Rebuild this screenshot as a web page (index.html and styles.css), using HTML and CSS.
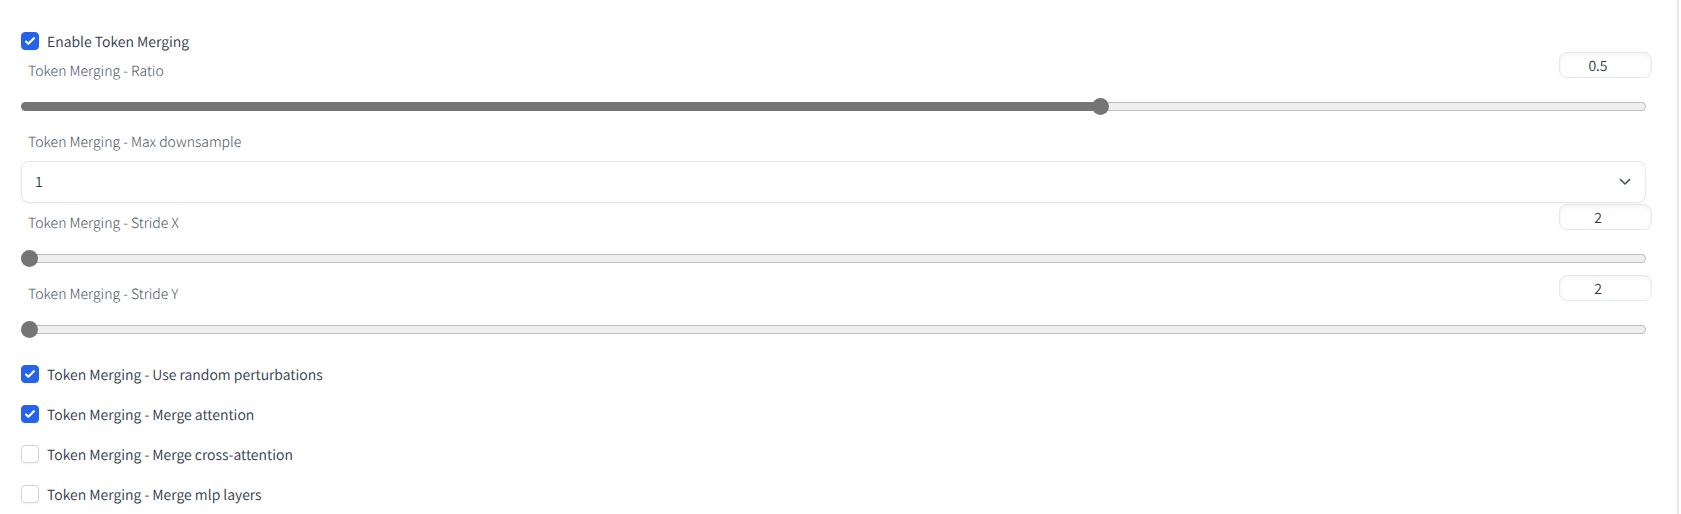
FILE: index.html
```html
<!DOCTYPE html>
<html lang="en">
<head>
<meta charset="utf-8">
<meta name="viewport" content="width=device-width, initial-scale=1">
<title>Token Merging</title>
<link rel="stylesheet" href="styles.css">
</head>
<body>
<main class="panel">
  <label class="check check-first"><input type="checkbox" checked><span>Enable Token Merging</span></label>

  <div class="slider">
    <div class="slider-head">
      <label class="caption" for="ratio">Token Merging - Ratio</label>
      <input class="number" type="number" value="0.5" step="0.05" aria-label="Token Merging - Ratio value">
    </div>
    <input class="range" id="ratio" type="range" min="0" max="0.75" step="0.05" value="0.5" style="--fill: 66.7%">
  </div>

  <div class="field">
    <label class="caption" for="downsample">Token Merging - Max downsample</label>
    <div class="select-wrap">
      <select class="select" id="downsample">
        <option selected>1</option>
        <option>2</option>
        <option>4</option>
        <option>8</option>
      </select>
      <svg class="chevron" viewBox="0 0 12 8" aria-hidden="true"><path d="M1 1.200 6 6l5-4.800"/></svg>
    </div>
  </div>

  <div class="slider">
    <div class="slider-head">
      <label class="caption" for="stride-x">Token Merging - Stride X</label>
      <input class="number" type="number" value="2" aria-label="Token Merging - Stride X value">
    </div>
    <input class="range" id="stride-x" type="range" min="2" max="8" step="2" value="2" style="--fill: 0%">
  </div>

  <div class="slider">
    <div class="slider-head">
      <label class="caption" for="stride-y">Token Merging - Stride Y</label>
      <input class="number" type="number" value="2" aria-label="Token Merging - Stride Y value">
    </div>
    <input class="range" id="stride-y" type="range" min="2" max="8" step="2" value="2" style="--fill: 0%">
  </div>

  <div class="checks">
    <label class="check"><input type="checkbox" checked><span>Token Merging - Use random perturbations</span></label>
    <label class="check"><input type="checkbox" checked><span>Token Merging - Merge attention</span></label>
    <label class="check"><input type="checkbox"><span>Token Merging - Merge cross-attention</span></label>
    <label class="check"><input type="checkbox"><span>Token Merging - Merge mlp layers</span></label>
  </div>
</main>
</body>
</html>
```
FILE: styles.css
```css
* {
  box-sizing: border-box;
}

body {
  margin: 0;
  background: #fff;
  color: #303a49;
  font-family: "Noto Sans CJK SC", "Noto Sans", sans-serif;
  font-size: 14px;
  font-weight: 350;
  line-height: 24px;
  text-rendering: geometricPrecision;
}

input,
select {
  margin: 0;
  color: inherit;
  font: inherit;
  text-rendering: inherit;
}

.panel {
  min-height: 100vh;
  margin-right: 2px;
  padding: 30px 31px 8px 21px;
  border-right: 2px solid #e5e7eb;
}

.check {
  display: flex;
  align-items: center;
  gap: 8px;
  width: fit-content;
  height: 24px;
}

.check span {
  padding-top: 1px;
}

.check-first {
  height: 22px;
}

.check input {
  appearance: none;
  width: 18px;
  height: 18px;
  border: 1px solid #d1d5db;
  border-radius: 4px;
  background: #fff;
  box-shadow: 0 1px 2px rgba(0, 0, 0, 0.05);
}

.check input:checked {
  border-color: #2563eb;
  background: #2563eb url("data:image/svg+xml,%3Csvg viewBox='0 0 16 16' fill='white' xmlns='http://www.w3.org/2000/svg'%3E%3Cpath d='M12.207 4.793a1 1 0 010 1.414l-5 5a1 1 0 01-1.414 0l-2-2a1 1 0 011.414-1.414L6.500 9.086l4.293-4.293a1 1 0 011.414 0z'/%3E%3C/svg%3E") center / 18px no-repeat border-box;
}

.checks {
  display: flex;
  flex-direction: column;
  gap: 16px;
  padding-top: 16px;
}

.caption {
  display: block;
  padding-left: 7px;
  color: #4b5563;
  font-weight: 300;
}

.slider {
  height: 71px;
}

.slider-head {
  display: flex;
  justify-content: space-between;
  height: 46px;
}

.slider-head .caption {
  padding-top: 7px;
}

.number {
  width: 93px;
  height: 26px;
  margin-right: -6px;
  padding: 1px 8px 0;
  border: 1px solid #e5e7eb;
  border-radius: 8px;
  background: #fff;
  box-shadow: inset 0 2px 4px rgba(0, 0, 0, 0.05);
  text-align: center;
}

.range {
  appearance: none;
  display: block;
  width: 100%;
  height: 17px;
  background: transparent;
}

.range::-webkit-slider-runnable-track {
  height: 9px;
  border: 1px solid transparent;
  border-radius: 5px;
  background:
    linear-gradient(#757575, #757575) 0 0 / var(--fill) 100% no-repeat border-box,
    linear-gradient(#efefef, #efefef) padding-box,
    linear-gradient(#bdbdbd, #bdbdbd) border-box;
}

.range::-webkit-slider-thumb {
  appearance: none;
  width: 17px;
  height: 17px;
  margin: -5px -1px 0;
  border-radius: 50%;
  background: #757575;
}

.field {
  display: grid;
  gap: 7px;
  padding: 7px 0 1px;
}

.select-wrap {
  display: grid;
  align-items: center;
}

.select-wrap > * {
  grid-area: 1 / 1;
}

.select {
  appearance: none;
  width: 100%;
  height: 42px;
  padding: 0 13px;
  border: 1px solid #e5e7eb;
  border-radius: 8px;
  background: #fff;
  box-shadow: 0 1px 2px rgba(0, 0, 0, 0.05);
}

.chevron {
  justify-self: end;
  width: 12px;
  height: 8px;
  margin-right: 15px;
  fill: none;
  stroke: #4b5563;
  stroke-width: 1.6;
  pointer-events: none;
}
```
